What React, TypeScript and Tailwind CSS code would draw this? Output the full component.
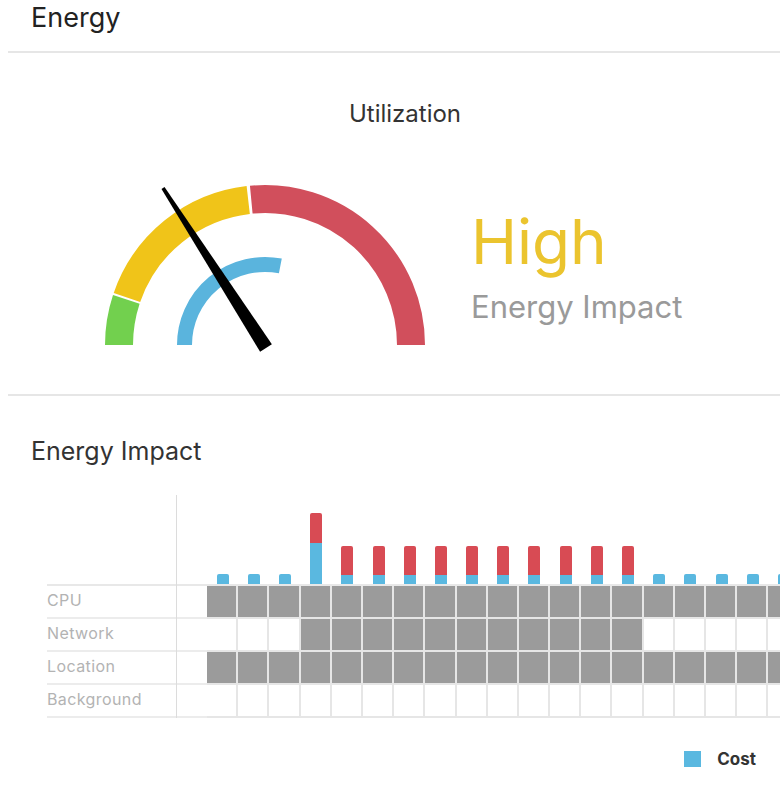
import React from 'react';

const COLS = 19;

type Bar = { blue: number; red: number };

const rows: { label: string; on: (i: number) => boolean }[] = [
  { label: 'CPU', on: () => true },
  { label: 'Network', on: (i) => i >= 3 && i <= 13 },
  { label: 'Location', on: () => true },
  { label: 'Background', on: () => false },
];

const bars: Bar[] = Array.from({ length: COLS }, (_, i) => {
  if (i === 3) return { blue: 41, red: 30 };
  if (i >= 4 && i <= 13) return { blue: 9, red: 29 };
  return { blue: 10, red: 0 };
});

// gauge geometry (svg coords)
const CX = 175;
const CY = 167;

const pt = (r: number, deg: number) => {
  const a = (deg * Math.PI) / 180;
  return `${(CX + r * Math.cos(a)).toFixed(2)} ${(CY - r * Math.sin(a)).toFixed(2)}`;
};

const arc = (r: number, from: number, to: number) =>
  `M ${pt(r, from)} A ${r} ${r} 0 0 1 ${pt(r, to)}`;

const needle = () => {
  const tip = { x: 73, y: 10 };
  const base = { x: 176, y: 170 };
  const dx = base.x - tip.x;
  const dy = base.y - tip.y;
  const len = Math.sqrt(dx * dx + dy * dy);
  const px = -dy / len;
  const py = dx / len;
  const t = 1.8;
  const b = 7;
  return [
    [tip.x + px * t, tip.y + py * t],
    [tip.x - px * t, tip.y - py * t],
    [base.x - px * b, base.y - py * b],
    [base.x + px * b, base.y + py * b],
  ]
    .map(([x, y]) => `${x.toFixed(2)},${y.toFixed(2)}`)
    .join(' ');
};

const Gauge: React.FC = () => (
  <svg width="350" height="182" viewBox="0 0 350 182">
    <path d={arc(146, 180, 161.8)} fill="none" stroke="#72d04e" strokeWidth="28" />
    <path d={arc(146, 161, 96.6)} fill="none" stroke="#f0c419" strokeWidth="28" />
    <path d={arc(146, 95.4, 0)} fill="none" stroke="#d14f5c" strokeWidth="28" />
    <path d={arc(80.5, 180, 79)} fill="none" stroke="#5ab4dd" strokeWidth="15" />
    <polygon points={needle()} fill="#000" />
  </svg>
);

export default function App() {
  return (
    <div className="w-full h-[788px] bg-white overflow-hidden font-['Inter',sans-serif] text-[#222]">
      <div className="h-[51px] pl-[31px] pt-[2px] text-[27px] leading-[32px]">Energy</div>
      <div className="ml-2 h-[2px] bg-[#e6e6e6]" />

      <div className="h-[341px] pt-[47px]">
        <div className="text-center pl-[30px] text-[24px] leading-[28px] text-[#333]">Utilization</div>
        <div className="mt-[50px] flex items-start pl-[90px]">
          <Gauge />
          <div className="ml-[31px] mt-[33px] flex flex-col">
            <span className="text-[62px] leading-[62px] text-[#ebc42e]">High</span>
            <span className="mt-[18px] text-[31px] leading-[31px] text-[#9a9a9a]">Energy Impact</span>
          </div>
        </div>
      </div>
      <div className="ml-2 h-[2px] bg-[#e6e6e6]" />

      <div className="pt-[40px]">
        <div className="pl-[31px] text-[25px] leading-[30px] text-[#333]">Energy Impact</div>

        <div className="mt-[29px] ml-[47px] flex">
          <div className="w-[129px] shrink-0 flex flex-col">
            <div className="h-[91px] border-b-2 border-[#e8e8e8]" />
            {rows.map((r) => (
              <div
                key={r.label}
                className="h-[33px] pb-[4px] border-b-2 border-[#ececec] flex items-center text-[16px] tracking-wide text-[#b3b3b3]"
              >
                {r.label}
              </div>
            ))}
          </div>

          <div className="flex border-l border-[#dcdcdc] overflow-hidden">
            <div className="w-[30px] shrink-0 flex flex-col">
              <div className="h-[91px] border-b-2 border-[#e8e8e8]" />
              {rows.map((r) => (
                <div key={r.label} className="h-[33px] border-b-2 border-[#ececec]" />
              ))}
            </div>
            {bars.map((b, i) => (
              <div key={i} className="w-[31.2px] shrink-0 flex flex-col">
                <div className="h-[91px] border-b-2 border-[#e8e8e8] flex items-end justify-center">
                  <div className="w-[12px] flex flex-col rounded-t-[2px] overflow-hidden">
                    {b.red > 0 && <div className="bg-[#d84b54]" style={{ height: b.red }} />}
                    <div className="bg-[#5ab8e0]" style={{ height: b.blue }} />
                  </div>
                </div>
                {rows.map((r) => (
                  <div
                    key={r.label}
                    className={`h-[33px] border-b-2 border-r-2 border-[#e6e6e6] ${r.on(i) ? 'bg-[#9b9b9b]' : 'bg-white'}`}
                  />
                ))}
              </div>
            ))}
          </div>
        </div>

        <div className="mt-[33px] flex items-center justify-end pr-[24px]">
          <div className="w-[17px] h-[16px] bg-[#5ab8e0]" />
          <span className="ml-[16px] text-[17px] leading-[16px] font-bold text-[#333]">Cost</span>
        </div>
      </div>
    </div>
  );
}
